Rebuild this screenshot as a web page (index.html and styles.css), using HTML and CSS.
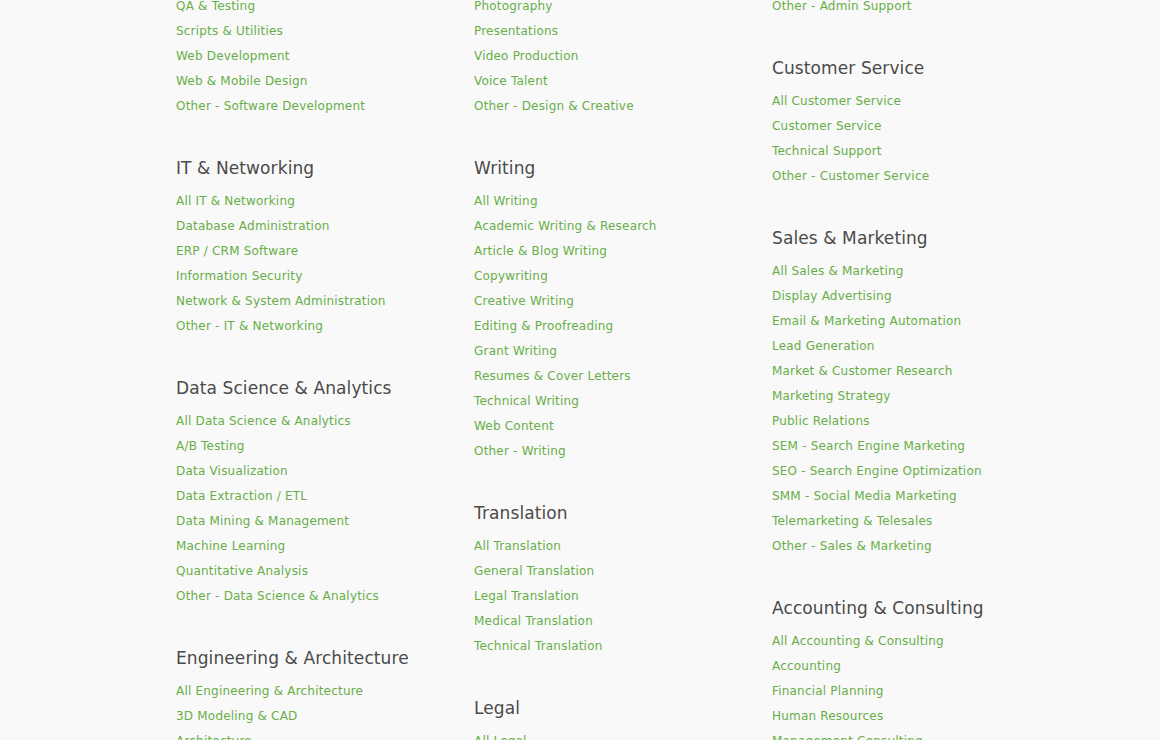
FILE: index.html
```html
<!DOCTYPE html>
<html lang="en">
<head>
    <meta charset="UTF-8">
    <meta name="viewport" content="width=device-width, initial-scale=1.0">
    <title>Browse Categories</title>
    <link rel="stylesheet" href="styles.css">
</head>
<body>
    <section class="categories">
        <div class="column">
            <ul class="links">
                <li><a href="#">QA &amp; Testing</a></li>
                <li><a href="#">Scripts &amp; Utilities</a></li>
                <li><a href="#">Web Development</a></li>
                <li><a href="#">Web &amp; Mobile Design</a></li>
                <li><a href="#">Other - Software Development</a></li>
            </ul>
            <div class="group">
                <h3>IT &amp; Networking</h3>
                <ul class="links">
                    <li><a href="#">All IT &amp; Networking</a></li>
                    <li><a href="#">Database Administration</a></li>
                    <li><a href="#">ERP / CRM Software</a></li>
                    <li><a href="#">Information Security</a></li>
                    <li><a href="#">Network &amp; System Administration</a></li>
                    <li><a href="#">Other - IT &amp; Networking</a></li>
                </ul>
            </div>
            <div class="group">
                <h3>Data Science &amp; Analytics</h3>
                <ul class="links">
                    <li><a href="#">All Data Science &amp; Analytics</a></li>
                    <li><a href="#">A/B Testing</a></li>
                    <li><a href="#">Data Visualization</a></li>
                    <li><a href="#">Data Extraction / ETL</a></li>
                    <li><a href="#">Data Mining &amp; Management</a></li>
                    <li><a href="#">Machine Learning</a></li>
                    <li><a href="#">Quantitative Analysis</a></li>
                    <li><a href="#">Other - Data Science &amp; Analytics</a></li>
                </ul>
            </div>
            <div class="group">
                <h3>Engineering &amp; Architecture</h3>
                <ul class="links">
                    <li><a href="#">All Engineering &amp; Architecture</a></li>
                    <li><a href="#">3D Modeling &amp; CAD</a></li>
                    <li><a href="#">Architecture</a></li>
                    <li><a href="#">Chemical Engineering</a></li>
                </ul>
            </div>
        </div>

        <div class="column">
            <ul class="links">
                <li><a href="#">Photography</a></li>
                <li><a href="#">Presentations</a></li>
                <li><a href="#">Video Production</a></li>
                <li><a href="#">Voice Talent</a></li>
                <li><a href="#">Other - Design &amp; Creative</a></li>
            </ul>
            <div class="group">
                <h3>Writing</h3>
                <ul class="links">
                    <li><a href="#">All Writing</a></li>
                    <li><a href="#">Academic Writing &amp; Research</a></li>
                    <li><a href="#">Article &amp; Blog Writing</a></li>
                    <li><a href="#">Copywriting</a></li>
                    <li><a href="#">Creative Writing</a></li>
                    <li><a href="#">Editing &amp; Proofreading</a></li>
                    <li><a href="#">Grant Writing</a></li>
                    <li><a href="#">Resumes &amp; Cover Letters</a></li>
                    <li><a href="#">Technical Writing</a></li>
                    <li><a href="#">Web Content</a></li>
                    <li><a href="#">Other - Writing</a></li>
                </ul>
            </div>
            <div class="group">
                <h3>Translation</h3>
                <ul class="links">
                    <li><a href="#">All Translation</a></li>
                    <li><a href="#">General Translation</a></li>
                    <li><a href="#">Legal Translation</a></li>
                    <li><a href="#">Medical Translation</a></li>
                    <li><a href="#">Technical Translation</a></li>
                </ul>
            </div>
            <div class="group">
                <h3>Legal</h3>
                <ul class="links">
                    <li><a href="#">All Legal</a></li>
                    <li><a href="#">Contract Law</a></li>
                </ul>
            </div>
        </div>

        <div class="column">
            <ul class="links">
                <li><a href="#">Other - Admin Support</a></li>
            </ul>
            <div class="group">
                <h3>Customer Service</h3>
                <ul class="links">
                    <li><a href="#">All Customer Service</a></li>
                    <li><a href="#">Customer Service</a></li>
                    <li><a href="#">Technical Support</a></li>
                    <li><a href="#">Other - Customer Service</a></li>
                </ul>
            </div>
            <div class="group">
                <h3>Sales &amp; Marketing</h3>
                <ul class="links">
                    <li><a href="#">All Sales &amp; Marketing</a></li>
                    <li><a href="#">Display Advertising</a></li>
                    <li><a href="#">Email &amp; Marketing Automation</a></li>
                    <li><a href="#">Lead Generation</a></li>
                    <li><a href="#">Market &amp; Customer Research</a></li>
                    <li><a href="#">Marketing Strategy</a></li>
                    <li><a href="#">Public Relations</a></li>
                    <li><a href="#">SEM - Search Engine Marketing</a></li>
                    <li><a href="#">SEO - Search Engine Optimization</a></li>
                    <li><a href="#">SMM - Social Media Marketing</a></li>
                    <li><a href="#">Telemarketing &amp; Telesales</a></li>
                    <li><a href="#">Other - Sales &amp; Marketing</a></li>
                </ul>
            </div>
            <div class="group">
                <h3>Accounting &amp; Consulting</h3>
                <ul class="links">
                    <li><a href="#">All Accounting &amp; Consulting</a></li>
                    <li><a href="#">Accounting</a></li>
                    <li><a href="#">Financial Planning</a></li>
                    <li><a href="#">Human Resources</a></li>
                    <li><a href="#">Management Consulting</a></li>
                </ul>
            </div>
        </div>
    </section>
</body>
</html>
```

FILE: styles.css
```css
body {
    font-family: "DejaVu Sans", sans-serif;
    margin: 0;
    padding: 0;
    background-color: #f9f9f9;
    height: 740px;
    overflow: hidden;
}

/* page is scrolled part way into the category list */
.categories {
    display: grid;
    grid-template-columns: 298px 298px 298px;
    padding-left: 176px;
    margin-top: -8px;
}

.column {
    display: flex;
    flex-direction: column;
    gap: 39px;
}

.group h3 {
    margin: 0 0 7px 0;
    font-size: 17px;
    font-weight: normal;
    line-height: 24px;
    color: #4a4a4a;
    letter-spacing: 0.1px;
}

.links {
    list-style: none;
    margin: 0;
    padding: 0;
}

.links li {
    line-height: 25px;
    height: 25px;
}

.links a {
    font-size: 12px;
    letter-spacing: 0.2px;
    color: #68ae48;
    text-decoration: none;
}
```
